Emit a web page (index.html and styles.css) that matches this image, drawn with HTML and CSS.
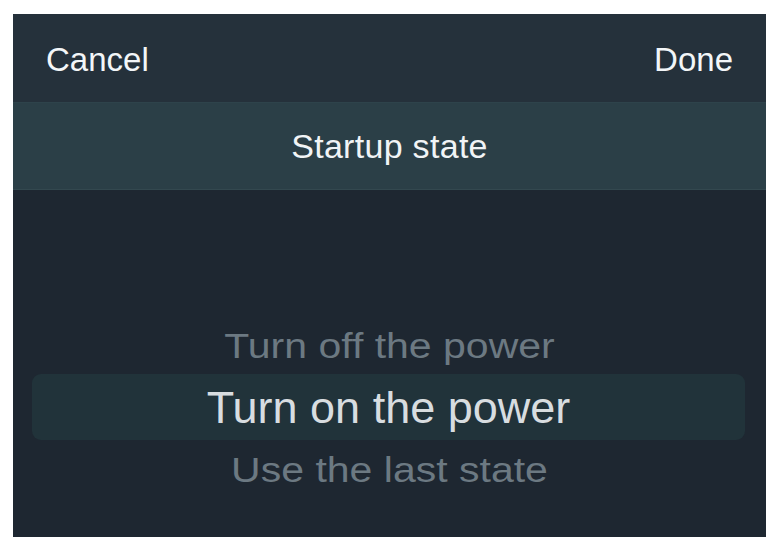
FILE: index.html
```html
<!DOCTYPE html>
<html lang="en">
<head>
<meta charset="utf-8">
<title>Startup state</title>
<link rel="stylesheet" href="styles.css">
</head>
<body>
<div class="sheet">
  <div class="toolbar">
    <span class="btn">Cancel</span>
    <span class="btn">Done</span>
  </div>
  <div class="title-bar">Startup state</div>
  <div class="picker">
    <div class="row row-dim"><span class="label">Turn off the power</span></div>
    <div class="row row-selected"><span class="label">Turn on the power</span></div>
    <div class="row row-dim row-after"><span class="label">Use the last state</span></div>
  </div>
</div>
</body>
</html>
```

FILE: styles.css
```css
html, body {
  margin: 0;
  padding: 0;
  background: #ffffff;
}

body {
  font-family: "Liberation Sans", Arial, sans-serif;
  padding: 14px 12px 9px 13px;
}

.sheet {
  width: 753px;
  height: 523px;
  background: #1e2731;
  display: flex;
  flex-direction: column;
  overflow: hidden;
}

.toolbar {
  height: 88px;
  box-sizing: border-box;
  padding: 3px 33px 0 33px;
  background: #25313b;
  display: flex;
  align-items: center;
  justify-content: space-between;
}

.btn {
  font-size: 33px;
  line-height: 38px;
  color: #f3f6f8;
}

.title-bar {
  height: 88px;
  box-sizing: border-box;
  background: #2b3f47;
  border-top: 1px solid #2e434b;
  border-bottom: 1px solid #33484f;
  display: flex;
  align-items: center;
  justify-content: center;
  font-size: 34px;
  line-height: 38px;
  letter-spacing: 0.3px;
  color: #f1f4f6;
}

.picker {
  flex: 1;
  display: flex;
  flex-direction: column;
  padding-top: 128px;
}

.row {
  display: flex;
  justify-content: center;
  align-items: center;
}

.row-dim {
  height: 56px;
  font-size: 41px;
  line-height: 56px;
  color: #6c7982;
}

.row-dim .label {
  display: inline-block;
  transform: scaleY(0.85);
}

.row-after {
  margin-top: 2px;
}

.row-selected {
  height: 66px;
  margin: 0 21px 0 19px;
  border-radius: 9px;
  background: #21333a;
  font-size: 45px;
  line-height: 67px;
  color: #d8dde0;
}
```
